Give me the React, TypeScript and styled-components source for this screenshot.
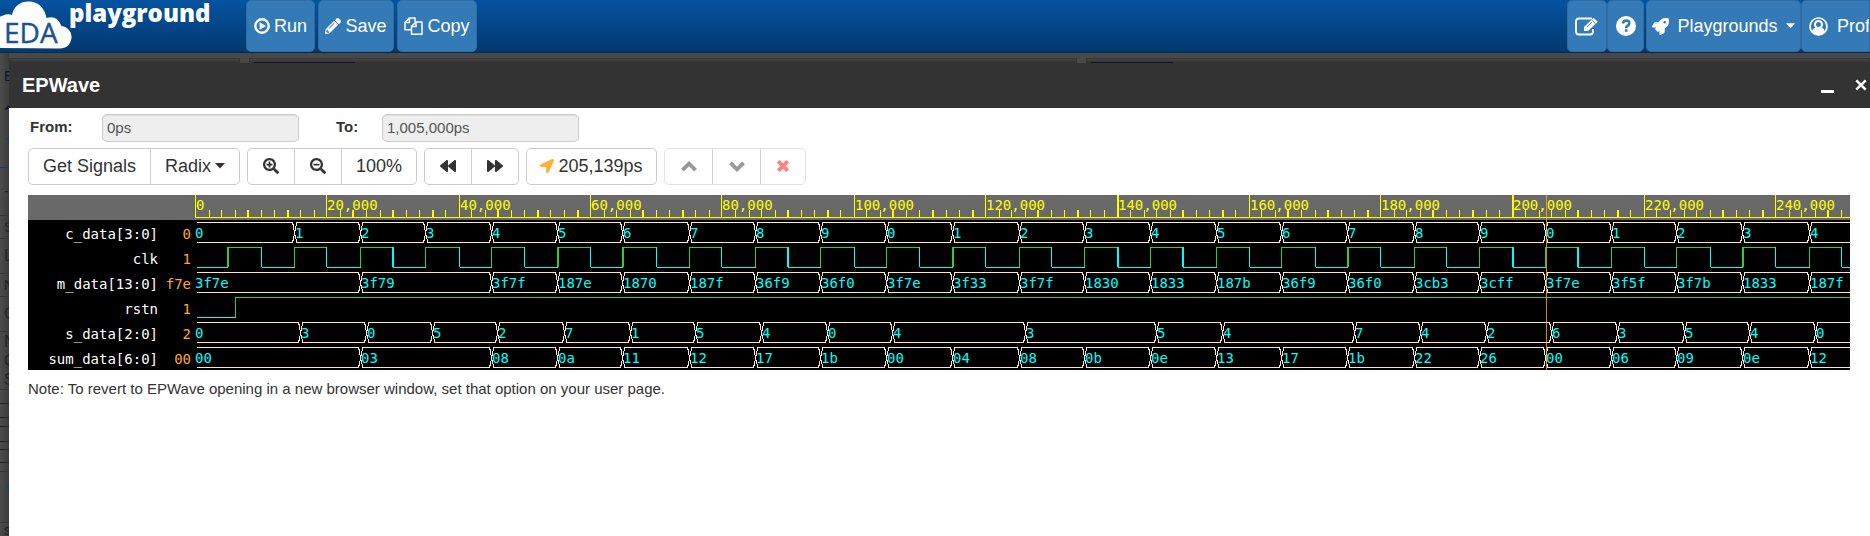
import React from 'react';
import styled, { createGlobalStyle, css } from 'styled-components';
import {
  FaBackward,
  FaForward,
  FaLocationArrow,
  FaPencilAlt,
  FaRocket,
  FaSearchMinus,
  FaSearchPlus,
} from 'react-icons/fa';

const MONO = '"DejaVu Sans Mono", monospace';
const SANS = '"Liberation Sans", Arial, sans-serif';

const GlobalStyle = createGlobalStyle`
  * { box-sizing: border-box; }
  html, body, #root { height: 100%; }
  body { margin: 0; background: #484848; font-family: ${SANS}; color: #333; overflow: hidden; }
  button, input { font-family: inherit; margin: 0; }
`;

const Page = styled.div`
  min-height: 100%;
  display: flex;
  flex-direction: column;
`;

const TopBar = styled.header`
  display: flex;
  align-items: flex-start;
  height: 53px;
  background: linear-gradient(#0453a1, #04396f);
  border-bottom: 1px solid #032a52;
`;

const Brand = styled.a`
  display: block;
  flex: none;
  width: 246px;
  height: 52px;
`;

const NavGroup = styled.nav<{ $gap: number }>`
  display: flex;
  flex: none;
  gap: ${(p) => p.$gap}px;
`;

const NavRight = styled.div`
  display: flex;
  gap: 2px;
  margin-left: auto;
`;

const NavButton = styled.button<{ $width: number; $gap?: number; $cut?: boolean }>`
  display: flex;
  align-items: center;
  justify-content: ${(p) => (p.$cut ? 'flex-start' : 'center')};
  gap: ${(p) => p.$gap ?? 4}px;
  width: ${(p) => p.$width}px;
  height: 52px;
  padding: 0 ${(p) => (p.$cut ? 0 : 4)}px 0 ${(p) => (p.$cut ? 7 : 4)}px;
  border: 1px solid #2e6da4;
  border-radius: ${(p) => (p.$cut ? '5px 0 0 5px' : '5px')};
  background: #337ab7;
  color: #fff;
  font-size: 18px;
  line-height: 24px;
  white-space: nowrap;
  overflow: hidden;
  svg { flex: none; }
`;

const Behind = styled.div`
  flex: 1;
  display: flex;
  min-height: 0;
`;

const SideStrip = styled.aside`
  flex: none;
  width: 9px;
  overflow: hidden;
  padding-top: 5px;
  background: linear-gradient(90deg, #4c4c4c, #3c3c3c);
`;

const SideRow = styled.div<{ $height: number; $color?: string; $line?: string; $size?: number }>`
  height: ${(p) => p.$height}px;
  padding-left: 4px;
  border-bottom: 1px solid ${(p) => p.$line ?? 'transparent'};
  color: ${(p) => p.$color ?? '#222'};
  font-size: ${(p) => p.$size ?? 14}px;
  line-height: ${(p) => p.$height - 1}px;
  overflow: hidden;
  white-space: nowrap;
`;

const Main = styled.div`
  flex: 1;
  min-width: 0;
  display: flex;
  flex-direction: column;
`;

const PanelEdges = styled.div`
  display: flex;
  gap: 9px;
  height: 10px;
  padding-top: 5px;
  background: #484848;
`;

const PanelEdge = styled.div<{ $width?: string; $tab?: number }>`
  flex: ${(p) => (p.$width ? 'none' : '1')};
  width: ${(p) => p.$width ?? 'auto'};
  border: 1px solid #363636;
  border-bottom: 0;
  background: linear-gradient(#454545, #303030);
  display: flex;
  align-items: flex-end;
  padding-left: 4px;
  &::after {
    content: '';
    width: ${(p) => p.$tab ?? 0}px;
    height: 1px;
    background: #0d1638;
  }
`;

const Dialog = styled.section`
  flex: 1;
  display: flex;
  flex-direction: column;
  background: #fff;
`;

const TitleBar = styled.div`
  display: flex;
  align-items: center;
  height: 45px;
  padding: 0 3px 2px 13px;
  background: #333;
  color: #fff;
`;

const Title = styled.h1`
  flex: 1;
  margin: 0;
  font-size: 20px;
  line-height: 24px;
`;

const WindowButton = styled.button`
  display: flex;
  align-items: center;
  justify-content: center;
  width: 34px;
  height: 34px;
  padding: 0;
  border: 0;
  background: transparent;
  color: #fff;
  &:last-child { width: 12px; margin-left: 11px; }
`;

const Content = styled.div`
  padding: 6px 20px 0 19px;
`;

const RangeRow = styled.div`
  display: flex;
  align-items: center;
  height: 28px;
`;

const RangeLabel = styled.label<{ $width: number }>`
  width: ${(p) => p.$width}px;
  padding: 0 0 2px 2px;
  font-size: 15px;
  line-height: 18px;
  font-weight: bold;
`;

const RangeInput = styled.input`
  width: 197px;
  height: 28px;
  padding: 0 4px 1px;
  margin-right: 35px;
  border: 1px solid #ccc;
  border-radius: 5px;
  background: #eee;
  box-shadow: inset 0 1px 1px rgba(0, 0, 0, 0.075);
  color: #555;
  font-size: 15px;
`;

const Toolbar = styled.div`
  display: flex;
  gap: 7px;
  margin: 6px 0 10px;
`;

const ButtonGroup = styled.div<{ $faded?: boolean }>`
  display: flex;
  border: 1px solid ${(p) => (p.$faded ? '#e2e2e2' : '#ccc')};
  border-radius: 5px;
`;

const ToolButton = styled.button<{ $width: number; $color?: string }>`
  display: flex;
  align-items: center;
  justify-content: center;
  gap: 4px;
  width: ${(p) => p.$width}px;
  height: 35px;
  padding: 0 0 1px;
  border: 0;
  background: transparent;
  color: ${(p) => p.$color ?? '#333'};
  font-size: 18px;
  line-height: 24px;
  white-space: nowrap;
  & + & { border-left: 1px solid #d0d0d0; }
`;

const Viewer = styled.div`
  display: flex;
  height: 175px;
  background: #000;
`;

const SignalColumn = styled.div`
  flex: none;
  width: 167px;
  padding-top: 25px;
  background: linear-gradient(#696969 25px, transparent 25px);
`;

const monoText = css`
  font-family: ${MONO};
  font-size: 14px;
`;

const SignalRow = styled.div`
  ${monoText}
  display: flex;
  height: 25px;
  line-height: 28px;
  color: #fff;
  text-align: right;
`;

const SignalName = styled.span`
  width: 130px;
`;

const SignalValue = styled.span`
  width: 33px;
  color: #ffa928;
`;

const Waves = styled.svg`
  ${monoText}
  flex: 1;
  min-width: 0;
  height: 175px;
  shape-rendering: crispEdges;
  overflow: hidden;
`;

const Note = styled.p`
  margin: 9px 0 0;
  font-size: 15px;
  line-height: 20px;
`;

/* ---- waveform data: [time in thousands of ps, value] ---- */

type Change = [number, string];

const series = (times: number[], values: string): Change[] =>
  values.split(' ').map((v, i) => [times[i], v]);

const steps = (from: number, to: number) => {
  const out: number[] = [];
  for (let t = from; t <= to; t += 10) out.push(t);
  return out;
};

type Signal =
  | { name: string; now: string; kind: 'bus'; data: Change[] }
  | { name: string; now: string; kind: 'bit'; edges: number[] };

const SIGNALS: Signal[] = [
  {
    name: 'c_data[3:0]', now: '0', kind: 'bus',
    data: series([0, ...steps(15, 245)], '0 1 2 3 4 5 6 7 8 9 0 1 2 3 4 5 6 7 8 9 0 1 2 3 4'),
  },
  { name: 'clk', now: '1', kind: 'bit', edges: Array.from({ length: 50 }, (_, i) => (i + 1) * 5) },
  {
    name: 'm_data[13:0]', now: 'f7e', kind: 'bus',
    data: series(
      [0, 25, ...steps(45, 245)],
      '3f7e 3f79 3f7f 187e 1870 187f 36f9 36f0 3f7e 3f33 3f7f 1830 1833 187b 36f9 36f0 3cb3 3cff 3f7e 3f5f 3f7b 1833 187f',
    ),
  },
  { name: 'rstn', now: '1', kind: 'bit', edges: [6.1] },
  {
    name: 's_data[2:0]', now: '2', kind: 'bus',
    data: series(
      [0, ...steps(16, 106), 126, 146, 156, ...steps(176, 246)],
      '0 3 0 5 2 7 1 5 4 0 4 3 5 4 7 4 2 6 3 5 4 0',
    ),
  },
  {
    name: 'sum_data[6:0]', now: '00', kind: 'bus',
    data: series(
      [0, 25, ...steps(45, 245)],
      '00 03 08 0a 11 12 17 1b 00 04 08 0b 0e 13 17 1b 22 26 00 06 09 0e 12',
    ),
  },
];

const UNITS_PER_K = 5.268;
const ZOOM = 1.25;
const END = 2400;

/* First device pixel and thickness of the canvas column that holds time t. */
const column = (t: number) => {
  const n = Math.round(t * UNITS_PER_K);
  const x = Math.ceil(n * ZOOM - 0.5);
  return { x, w: Math.ceil((n + 1) * ZOOM - 0.5) - x };
};

const Ruler = () => (
  <g fill="#ff0">
    <rect width="100%" height="25" fill="#696969" />
    <rect y="22" width="100%" height="1" />
    {Array.from({ length: 126 }, (_, i) => {
      const t = i * 2;
      const { x, w } = column(t);
      const major = t % 20 === 0;
      return (
        <React.Fragment key={t}>
          <rect x={x} y={major ? 0 : 15} width={w} height={major ? 23 : 8} />
          {major && (
            <text x={x + 1} y="15">{(t * 1000).toLocaleString('en-US')}</text>
          )}
        </React.Fragment>
      );
    })}
  </g>
);

const Bus = ({ data, top }: { data: Change[]; top: number }) => (
  <g>
    {data.map(([t, value], i) => {
      const x = column(t).x;
      const start = i === 0 ? 2 : x + 2;
      const end = i + 1 < data.length ? column(data[i + 1][0]).x - 1 : END;
      return (
        <React.Fragment key={t}>
          <g fill="#ffe4c4">
            <rect x={start} y={top + 2} width={end - start} height="1" />
            <rect x={start} y={top + 22} width={end - start} height="1" />
            {i > 0 && (
              <>
                <rect x={x + 2} y={top + 3} width="1" height="3" />
                <rect x={x + 1} y={top + 6} width="1" height="5" />
                <rect x={x} y={top + 10} width="1" height="6" />
                <rect x={x + 1} y={top + 15} width="1" height="4" />
                <rect x={x + 2} y={top + 19} width="1" height="3" />
                <rect x={x - 2} y={top + 3} width="1" height="2" />
                <rect x={x - 1} y={top + 4} width="1" height="6" />
                <rect x={x - 1} y={top + 16} width="1" height="5" />
                <rect x={x - 2} y={top + 20} width="1" height="2" />
              </>
            )}
          </g>
          <text x={i === 0 ? 0 : x + 1} y={top + 18} fill="#0ff">{value}</text>
        </React.Fragment>
      );
    })}
  </g>
);

const Bit = ({ edges, top }: { edges: number[]; top: number }) => (
  <g>
    {[0, ...edges].map((t, i, all) => {
      const high = i % 2 === 1;
      const c = column(t);
      const end = i + 1 < all.length ? column(all[i + 1]).x : END;
      const start = i === 0 ? 2 : c.x + 1;
      return (
        <g key={t} fill={high ? '#32cd32' : '#0ff'}>
          <rect x={start} y={high ? top + 2 : top + 22} width={end - start + 1} height="1" />
          {i > 0 && <rect x={c.x} y={top + 2} width={c.w} height="20" />}
        </g>
      );
    })}
  </g>
);

const SIDE_ROWS: { h: number; text?: string; color?: string; line?: string; size?: number }[] = [
  { h: 38, text: 'E', color: '#0d1638' },
  { h: 18, text: '◢', color: '#0d1638', size: 12 },
  { h: 22 },
  { h: 12, text: '▼', color: '#163f56', size: 12 },
  { h: 20, line: '#163f56' },
  { h: 48, text: '-', line: '#353535' },
  { h: 23, text: 'S', line: '#353535' },
  { h: 35, text: 'L', size: 16, line: '#353535' },
  { h: 23, text: 'N', line: '#353535' },
  { h: 35, text: 'C', size: 16, line: '#353535' },
  { h: 20, text: 'N', size: 16 },
  { h: 18, text: 'C', size: 16 },
  { h: 20, text: 'S', size: 16, line: '#353535' },
  { h: 14, line: '#222' },
  { h: 14, line: '#222' },
  { h: 9, line: '#222' },
  { h: 15, line: '#222' },
  { h: 8, line: '#222' },
  { h: 13, line: '#222' },
  { h: 9, line: '#353535' },
  { h: 36, text: '▼', color: '#163f56', size: 12 },
  { h: 15, line: '#353535' },
  { h: 16, text: 's' },
];

const EdaLogo = () => (
  <svg width="246" height="52" viewBox="0 0 246 52" role="img" aria-label="EDA playground">
    <path
      d="M-4 48C-8 40-8 18 3 15.500Q8 13.500 12 15C14 6 20 1.500 29 1.500C38 1.500 45 8 46.500 18Q57 14.500 61.500 26C68 27 72 32 71.500 38C70.500 45 66 48.500 60 48.500Z"
      fill="#fff"
    />
    <text x="4" y="43" fontFamily="Open Sans, sans-serif" fontSize="28" fill="#1c5390" stroke="#1c5390" strokeWidth="0.4">EDA</text>
    <text x="69" y="22" fontFamily="Open Sans, sans-serif" fontWeight="800" fontSize="24" fill="#fff">playground</text>
  </svg>
);

const PlayCircle = () => (
  <svg width="16" height="16" viewBox="0 0 16 16" fill="none" stroke="#fff" strokeWidth="2.4">
    <circle cx="8" cy="8" r="6.7" />
    <path d="M5.600 4.200V11.800L12 8Z" fill="#fff" stroke="none" />
  </svg>
);

const CopyIcon = () => (
  <svg width="19" height="18" viewBox="0 0 19 18" fill="none" stroke="#fff" strokeWidth="1.5" strokeLinejoin="round">
    <path d="M7.500 12.800H1V5.600L5.400 1H11V5" />
    <path d="M5.400 1V5.600H1" />
    <path d="M7.500 9.400L12 5H18V17.200H7.500Z" />
    <path d="M12 5V9.400H7.500" />
  </svg>
);

const EditIcon = () => (
  <svg width="24" height="19" viewBox="0 0 24 19" fill="none" stroke="#fff" strokeWidth="1.8">
    <path d="M17 1.500H4Q1 1.500 1 4.500V14.500Q1 17.500 4 17.500H15Q18 17.500 18 14.500V12" />
    <path d="M9 10L18.500 .8L22.800 4.800L13 14H9Z" fill="#fff" stroke="none" />
    <path d="M16.600 3L20.600 6.800M12 9.800L17 5" stroke="#337ab7" strokeWidth="0.9" />
  </svg>
);

const HelpIcon = () => (
  <svg width="20" height="20" viewBox="0 0 20 20">
    <circle cx="10" cy="10" r="10" fill="#fff" />
    <path d="M6.800 7.600Q7.400 4.600 10.200 4.600Q13.400 4.600 13.300 7.400Q13.200 9 11.400 9.900Q10.200 10.600 10.200 12" fill="none" stroke="#337ab7" strokeWidth="2.6" />
    <rect x="8.900" y="13.200" width="2.6" height="2.6" fill="#337ab7" />
  </svg>
);

const UserIcon = () => (
  <svg width="19" height="19" viewBox="0 0 19 19">
    <circle cx="9.500" cy="9.500" r="8.500" fill="none" stroke="#fff" strokeWidth="1.7" />
    <circle cx="9.500" cy="7.500" r="3.500" fill="none" stroke="#fff" strokeWidth="2" />
    <path d="M3 14.500Q4 11.200 6.600 10.600Q9.500 12.800 12.400 10.600Q15 11.200 16 14.500Q13.500 18.200 9.500 18.200Q5.500 18.200 3 14.500Z" fill="#fff" />
  </svg>
);

const Caret = ({ width }: { width: number }) => (
  <svg width={width} height="6" viewBox="0 0 10 6"><path d="M0 0H10L5 5.600Z" fill="currentColor" /></svg>
);

const Chevron = ({ up }: { up?: boolean }) => (
  <svg width="16" height="11" viewBox="0 0 16 11" fill="none" stroke="currentColor" strokeWidth="3.8">
    <path d={up ? 'M1.400 9.200L8 2.700L14.600 9.200' : 'M1.400 1.800L8 8.300L14.600 1.800'} />
  </svg>
);

const Cross = ({ weight }: { weight: number }) => (
  <svg width="12" height="12" viewBox="0 0 12 12">
    <path d="M1.300 1.300L10.700 10.700M10.700 1.300L1.300 10.700" stroke="currentColor" strokeWidth={weight} />
  </svg>
);

export default function App() {
  return (
    <Page>
      <GlobalStyle />
      <TopBar>
        <Brand href="#"><EdaLogo /></Brand>
        <NavGroup $gap={3}>
          <NavButton $width={69}><PlayCircle />Run</NavButton>
          <NavButton $width={76}><FaPencilAlt size={16} />Save</NavButton>
          <NavButton $width={80}><CopyIcon />Copy</NavButton>
        </NavGroup>
        <NavRight>
          <NavGroup $gap={0}>
            <NavButton $width={40} aria-label="Edit"><EditIcon /></NavButton>
            <NavButton $width={37} aria-label="Help"><HelpIcon /></NavButton>
          </NavGroup>
          <NavGroup $gap={0}>
            <NavButton $width={155} $gap={8}>
              <FaRocket size={17} />
              <span>Playgrounds</span>
              <Caret width={9} />
            </NavButton>
            <NavButton $width={69} $gap={9} $cut><UserIcon />Profile</NavButton>
          </NavGroup>
        </NavRight>
      </TopBar>
      <Behind>
        <SideStrip aria-hidden="true">
          {SIDE_ROWS.map((r, i) => (
            <SideRow key={i} $height={r.h} $color={r.color} $line={r.line} $size={r.size}>{r.text}</SideRow>
          ))}
        </SideStrip>
        <Main>
          <PanelEdges>
            <PanelEdge $width="231px" />
            <PanelEdge $width="44.5%" $tab={101} />
            <PanelEdge $tab={82} />
          </PanelEdges>
          <Dialog aria-label="EPWave">
            <TitleBar>
              <Title>EPWave</Title>
              <WindowButton aria-label="Minimize">
                <svg width="13" height="16" viewBox="0 0 13 16"><path d="M0 13H13V16H0Z" fill="#fff" /></svg>
              </WindowButton>
              <WindowButton aria-label="Close"><Cross weight={2.6} /></WindowButton>
            </TitleBar>
            <Content>
              <RangeRow>
                <RangeLabel htmlFor="from" $width={74}>From:</RangeLabel>
                <RangeInput id="from" defaultValue="0ps" readOnly />
                <RangeLabel htmlFor="to" $width={48}>To:</RangeLabel>
                <RangeInput id="to" defaultValue="1,005,000ps" readOnly />
              </RangeRow>
              <Toolbar>
                <ButtonGroup>
                  <ToolButton $width={121}>Get Signals</ToolButton>
                  <ToolButton $width={89}>Radix<Caret width={10} /></ToolButton>
                </ButtonGroup>
                <ButtonGroup>
                  <ToolButton $width={46} aria-label="Zoom in"><FaSearchPlus size={16} /></ToolButton>
                  <ToolButton $width={47} aria-label="Zoom out"><FaSearchMinus size={16} /></ToolButton>
                  <ToolButton $width={75}>100%</ToolButton>
                </ButtonGroup>
                <ButtonGroup>
                  <ToolButton $width={46} aria-label="Previous"><FaBackward size={16} /></ToolButton>
                  <ToolButton $width={47} aria-label="Next"><FaForward size={16} /></ToolButton>
                </ButtonGroup>
                <ButtonGroup>
                  <ToolButton $width={129}><FaLocationArrow size={14} color="#ffb133" />205,139ps</ToolButton>
                </ButtonGroup>
                <ButtonGroup $faded>
                  <ToolButton $width={47} $color="#999" aria-label="Move up"><Chevron up /></ToolButton>
                  <ToolButton $width={48} $color="#999" aria-label="Move down"><Chevron /></ToolButton>
                  <ToolButton $width={45} $color="#ff8080" aria-label="Remove"><Cross weight={3.8} /></ToolButton>
                </ButtonGroup>
              </Toolbar>
              <Viewer>
                <SignalColumn>
                  {SIGNALS.map((s) => (
                    <SignalRow key={s.name}>
                      <SignalName>{s.name}</SignalName>
                      <SignalValue>{s.now}</SignalValue>
                    </SignalRow>
                  ))}
                </SignalColumn>
                <Waves>
                  <Ruler />
                  {SIGNALS.map((s, i) =>
                    s.kind === 'bus'
                      ? <Bus key={s.name} data={s.data} top={25 + i * 25} />
                      : <Bit key={s.name} edges={s.edges} top={25 + i * 25} />,
                  )}
                  <rect x={column(205.139).x} width="1" height="175" fill="#ffa928" opacity="0.8" />
                </Waves>
              </Viewer>
              <Note>Note: To revert to EPWave opening in a new browser window, set that option on your user page.</Note>
            </Content>
          </Dialog>
        </Main>
      </Behind>
    </Page>
  );
}
